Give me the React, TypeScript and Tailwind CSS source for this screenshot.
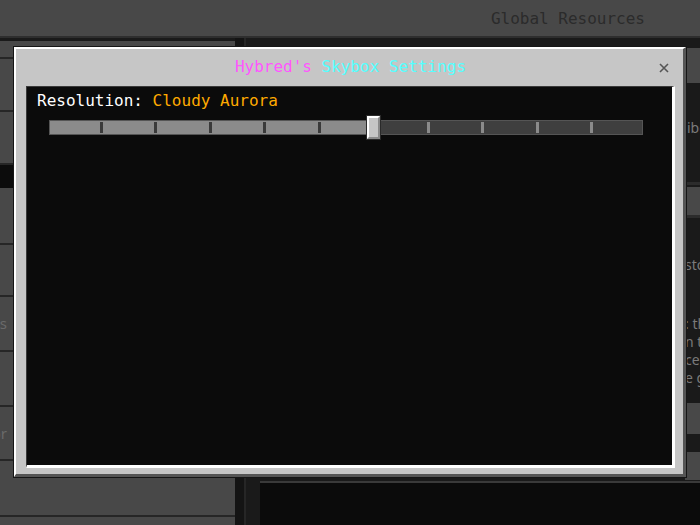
import type { ReactNode } from "react";

const TICKS = [1, 2, 3, 4, 5, 7, 8, 9, 10];
const THUMB_STEP = 6;

function SideButton({ label, height }: { label?: string; height: number }) {
  return (
    <div
      className="flex shrink-0 items-center overflow-hidden whitespace-nowrap border-b-2 border-[#262626] bg-[#484848] text-[15px] text-[#6a6a6a]"
      style={{ height }}
    >
      {label ? <span className="-ml-[200px] w-[207px] shrink-0 text-right">{label}</span> : null}
    </div>
  );
}

function PeekLine({ children, className = "" }: { children: ReactNode; className?: string }) {
  return (
    <div className={`whitespace-nowrap text-[14px] leading-[18px] text-[#7a7a7a] ${className}`}>
      {children}
    </div>
  );
}

function Slider() {
  const thumbCenter = 46.5 + THUMB_STEP * 54.5 - 49;
  return (
    <div className="relative ml-[22px] mt-[5px] flex h-[25px] w-[594px] items-center">
      <div className="flex h-[15px] w-full border border-[#555555]">
        <div className="bg-[#8b8b8b]" style={{ width: thumbCenter - 8 }} />
        <div className="flex-1 bg-[#3f3f3f]" />
      </div>
      {TICKS.map((k) => {
        const left = 46.5 + k * 54.5 - 49 - 1.5;
        return (
          <div
            key={k}
            className={`absolute top-[7px] h-[11px] w-[3px] ${
              k < THUMB_STEP ? "bg-[#3a3a3a]" : "bg-[#8b8b8b]"
            }`}
            style={{ left }}
          />
        );
      })}
      <div
        className="absolute top-0 h-[25px] w-[15px] border border-[#2a2a2a]"
        style={{ left: thumbCenter - 7.5 }}
      >
        <div className="h-full w-full border-2 border-l-white border-t-white border-b-[#8b8b8b] border-r-[#8b8b8b] bg-[#c6c6c6]" />
      </div>
    </div>
  );
}

function SettingsDialog() {
  return (
    <div className="absolute left-[14px] top-[47px] flex h-[430px] w-[672px] flex-col border-b-[3px] border-l-2 border-r-[3px] border-t-2 border-b-[#555555] border-l-white border-r-[#555555] border-t-white bg-[#c6c6c6] pb-[6px] pl-[10px] pr-[8px] shadow-[0_0_0_1px_#161616]">
      <div className="relative flex h-[37px] items-center justify-center pb-[2px] text-[16px] leading-[19px]">
        <span className="text-[#ff55ff]">Hybred's</span>
        <span className="ml-[9.6px] text-[#55ffff]">Skybox Settings</span>
        <svg
          className="absolute right-[6px] top-[14px]"
          width="10"
          height="10"
          viewBox="0 0 10 10"
          aria-label="Close"
        >
          <path d="M1 1 L9 9 M9 1 L1 9" stroke="#555555" strokeWidth="1.6" />
        </svg>
      </div>
      <div className="flex flex-1 flex-col border-b-[3px] border-l border-r-[3px] border-t border-b-white border-l-[#3a3a3a] border-r-white border-t-[#3a3a3a] bg-[#0b0b0b] pl-[10px] pt-[4px]">
        <div className="text-[16px] leading-[19px] text-white">
          Resolution: <span className="text-[#ffaa00]">Cloudy Aurora</span>
        </div>
        <div className="-ml-[10px]">
          <Slider />
        </div>
      </div>
    </div>
  );
}

export default function App() {
  return (
    <div className="relative h-[525px] w-[700px] overflow-hidden bg-[#1a1a1a] font-['DejaVu_Sans_Mono',monospace]">
      <header className="flex h-[38px] items-center justify-end border-b-2 border-[#2e2e2e] bg-[#484848] pr-[55px]">
        <span className="text-[16px] leading-[19px] text-[#2b2b2b]">Global Resources</span>
      </header>
      <div className="flex h-[487px] font-['Noto_Sans',sans-serif]">
        <aside className="flex w-[235px] flex-col overflow-hidden pt-[3px]">
          <SideButton height={18} />
          <SideButton height={53} />
          <SideButton height={53} />
          <div className="h-[23px] shrink-0 bg-[#0c0c0c]" />
          <SideButton height={57} />
          <SideButton height={52} />
          <SideButton label="Subscriptions" height={55} />
          <SideButton height={55} />
          <SideButton label="Creator" height={54} />
          <SideButton height={56} />
          <SideButton height={30} />
        </aside>
        <div className="w-[11px] border-r-2 border-[#262626] bg-[#141414]" />
        <main className="flex flex-1 flex-col overflow-hidden">
          <div className="flex flex-1 flex-col bg-[#1a1a1a] pl-[439px] pt-[10px]">
            <div className="h-[35px] bg-[#484848]" />
            <PeekLine className="mt-[36px] pl-[2px]">ibed packs</PeekLine>
            <div className="mt-[45px] h-[3px] bg-[#2c2c2c]" />
            <div className="mt-[2px] h-[28px] bg-[#484848]" />
            <div className="h-[3px] bg-[#2c2c2c]" />
            <PeekLine className="mt-[38px]">storage</PeekLine>
            <PeekLine className="mt-[41px]">: the</PeekLine>
            <PeekLine>n this</PeekLine>
            <PeekLine>ce use</PeekLine>
            <PeekLine>e game</PeekLine>
            <div className="mt-[16px] h-[31px] bg-[#484848]" />
            <div className="mt-[18px] h-[28px] bg-[#484848]" />
          </div>
          <div className="ml-[14px] h-[44px] border-t-2 border-[#3a3a3a] bg-[#0b0b0b]" />
        </main>
      </div>
      <SettingsDialog />
    </div>
  );
}
